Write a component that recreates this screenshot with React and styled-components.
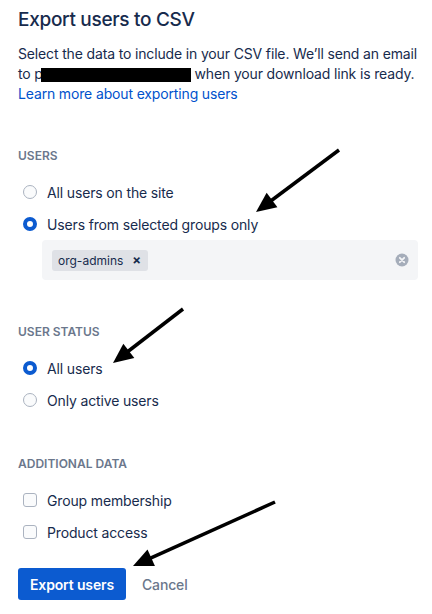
import React from 'react';
import styled, { createGlobalStyle } from 'styled-components';

const GlobalStyle = createGlobalStyle`
  html, body {
    margin: 0;
    padding: 0;
    background: #ffffff;
  }
  body {
    font-family: Inter, "Noto Sans", "Liberation Sans", sans-serif;
    color: #172B4D;
    letter-spacing: -0.15px;
    -webkit-font-smoothing: antialiased;
  }
`;

const arrows = [
  { from: [339, 150], to: [256, 212] },
  { from: [183, 309], to: [113, 363] },
  { from: [275, 502], to: [133, 566] },
];

function Arrow({ from, to }) {
  const dx = to[0] - from[0];
  const dy = to[1] - from[1];
  const len = Math.hypot(dx, dy);
  const ux = dx / len;
  const uy = dy / len;
  const head = 20;
  const half = 9;
  const bx = to[0] - ux * head;
  const by = to[1] - uy * head;
  const nx = -uy * half;
  const ny = ux * half;
  const pts = `${to[0]},${to[1]} ${bx + nx},${by + ny} ${bx - nx},${by - ny}`;
  return (
    <g>
      <line x1={from[0]} y1={from[1]} x2={bx + ux * 2} y2={by + uy * 2} stroke="#000" strokeWidth="3.5" />
      <polygon points={pts} fill="#000" />
    </g>
  );
}

function Radio({ checked, children }) {
  return (
    <OptionRow>
      <RadioDot checked={checked} />
      <OptionText>{children}</OptionText>
    </OptionRow>
  );
}

function Check({ children }) {
  return (
    <OptionRow>
      <CheckBox />
      <OptionText>{children}</OptionText>
    </OptionRow>
  );
}

export default function App() {
  return (
    <Page>
      <GlobalStyle />
      <Title>Export users to CSV</Title>
      <Intro>
        Select the data to include in your CSV file. We’ll send an email
        to p<Redacted /> when your download link is ready.
        <br />
        <Link href="#">Learn more about exporting users</Link>
      </Intro>

      <Section>
        <Label>Users</Label>
        <Options>
          <Radio>All users on the site</Radio>
          <Radio checked>Users from selected groups only</Radio>
        </Options>
        <GroupSelect>
          <Chip>
            org-admins
            <ChipRemove>×</ChipRemove>
          </Chip>
          <ClearIcon width="14" height="14" viewBox="0 0 14 14">
            <circle cx="7" cy="7" r="6.5" fill="#A5ADBA" />
            <path d="M4.8 4.8 L9.2 9.2 M9.2 4.8 L4.8 9.2" stroke="#F4F5F7" strokeWidth="1.8" strokeLinecap="round" />
          </ClearIcon>
        </GroupSelect>
      </Section>

      <Section>
        <Label>User status</Label>
        <Options>
          <Radio checked>All users</Radio>
          <Radio>Only active users</Radio>
        </Options>
      </Section>

      <Section>
        <Label>Additional data</Label>
        <Options>
          <Check>Group membership</Check>
          <Check>Product access</Check>
        </Options>
      </Section>

      <Actions>
        <PrimaryButton>Export users</PrimaryButton>
        <SubtleButton>Cancel</SubtleButton>
      </Actions>

      <Overlay width="432" height="614" viewBox="0 0 432 614">
        {arrows.map((a, i) => (
          <Arrow key={i} from={a.from} to={a.to} />
        ))}
      </Overlay>
    </Page>
  );
}

const Page = styled.div`
  position: relative;
  width: 432px;
  height: 614px;
  box-sizing: border-box;
  padding: 8px 8px 0 18px;
  overflow: hidden;
`;

const Title = styled.h1`
  margin: 0;
  font-size: 19px;
  line-height: 24px;
  font-weight: 500;
  letter-spacing: -0.3px;
  color: #172B4D;
`;

const Intro = styled.p`
  margin: 12px 0 0;
  font-size: 14px;
  line-height: 20px;
  color: #172B4D;
`;

const Redacted = styled.span`
  display: inline-block;
  width: 150px;
  height: 14px;
  margin-left: -2px;
  vertical-align: -3px;
  background: #000;
`;

const Link = styled.a`
  color: #0052CC;
  text-decoration: none;
`;

const Section = styled.section`
  margin-top: 44px;
`;

const Label = styled.div`
  font-size: 12px;
  line-height: 16px;
  font-weight: 600;
  letter-spacing: 0;
  color: #6B778C;
  text-transform: uppercase;
`;

const Options = styled.div`
  display: flex;
  flex-direction: column;
  gap: 8px;
  margin-top: 16px;
`;

const OptionRow = styled.label`
  display: flex;
  align-items: center;
  gap: 10px;
  height: 24px;
  padding-left: 5px;
`;

const OptionText = styled.span`
  font-size: 14px;
  color: #172B4D;
`;

const RadioDot = styled.span`
  box-sizing: border-box;
  width: 14px;
  height: 14px;
  border-radius: 50%;
  flex-shrink: 0;
  border: ${(p) => (p.checked ? '4.5px solid #0C5BD0' : '1.5px solid #ABB3C0')};
  background: ${(p) => (p.checked ? '#ffffff' : '#FAFBFC')};
`;

const CheckBox = styled.span`
  box-sizing: border-box;
  width: 14px;
  height: 14px;
  border-radius: 3px;
  flex-shrink: 0;
  border: 1.5px solid #ABB3C0;
  background: #FAFBFC;
`;

const GroupSelect = styled.div`
  display: flex;
  align-items: center;
  justify-content: space-between;
  height: 40px;
  box-sizing: border-box;
  margin: 4px 6px 0 24px;
  padding: 0 10px;
  border-radius: 4px;
  background: #F4F5F7;
`;

const Chip = styled.span`
  display: inline-flex;
  align-items: center;
  gap: 9px;
  height: 21px;
  padding: 0 7px 0 6px;
  border-radius: 3px;
  background: #DFE1E6;
  font-size: 12px;
  letter-spacing: 0;
  color: #172B4D;
`;

const ChipRemove = styled.span`
  font-size: 13px;
  font-weight: 700;
  line-height: 1;
  color: #172B4D;
`;

const ClearIcon = styled.svg`
  display: block;
  margin-right: -1px;
`;

const Actions = styled.div`
  display: flex;
  align-items: center;
  gap: 4px;
  margin-top: 24px;
`;

const PrimaryButton = styled.button`
  height: 32px;
  padding: 0 12px;
  border: none;
  border-radius: 3px;
  background: #0C5BD0;
  color: #ffffff;
  font-family: inherit;
  font-size: 14px;
  font-weight: 600;
  letter-spacing: -0.15px;
  cursor: pointer;
`;

const SubtleButton = styled.button`
  height: 32px;
  padding: 0 12px;
  border: none;
  background: none;
  color: #6B778C;
  font-family: inherit;
  font-size: 14px;
  font-weight: 500;
  letter-spacing: -0.15px;
  cursor: pointer;
`;

const Overlay = styled.svg`
  position: absolute;
  top: 0;
  left: 0;
  pointer-events: none;
`;
